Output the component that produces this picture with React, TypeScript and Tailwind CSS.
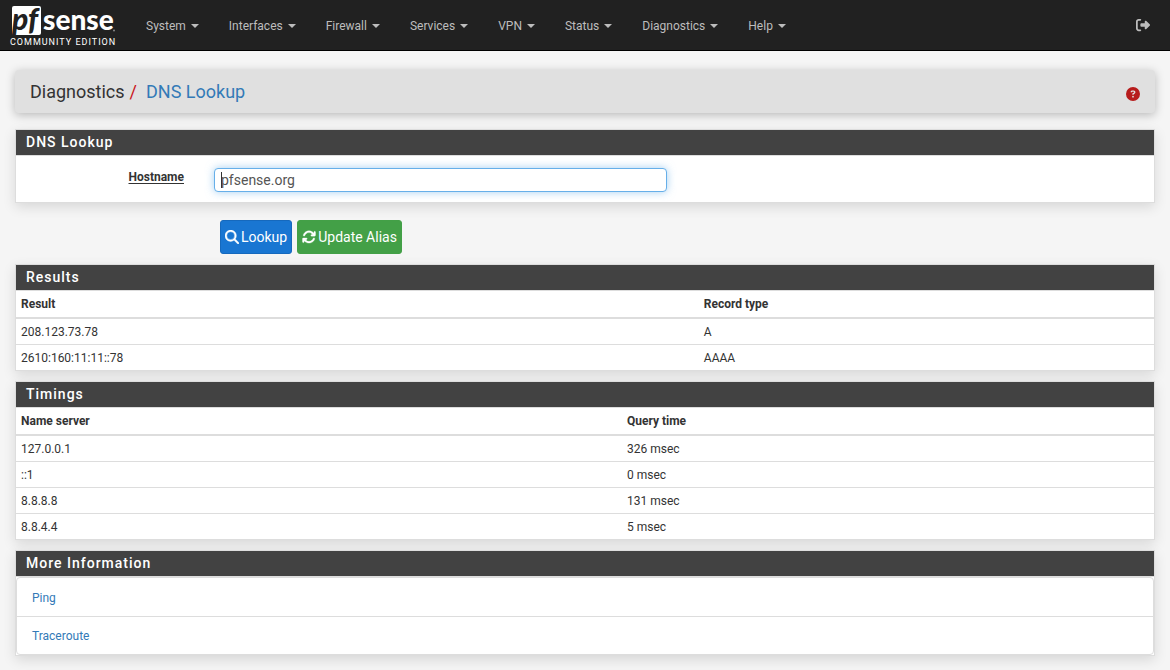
import type { ReactNode } from "react";
import { FaArrowsRotate, FaCircleQuestion, FaMagnifyingGlass, FaRightFromBracket } from "react-icons/fa6";

const menus = ["System", "Interfaces", "Firewall", "Services", "VPN", "Status", "Diagnostics", "Help"];

function Logo() {
  return (
    <svg viewBox="0 -6 106 42" className="h-[42px] w-[106px]" role="img" aria-label="pfSense">
      <path d="M4 0H29A2 2 0 0 1 31 2V27A2 2 0 0 1 29 29H4A2 2 0 0 1 2 27V2A2 2 0 0 1 4 0Z" fill="#fff" />
      <text x="2" y="24" fontFamily="Lato" fontStyle="italic" fontWeight="900" fontSize="30" fill="#212121">pf</text>
      <text x="33" y="24" fontFamily="Lato" fontWeight="900" fontSize="28" fill="#fff">sense</text>
      <circle cx="104" cy="24.500" r="1" fill="#888" />
    </svg>
  );
}

function Panel({ title, children }: { title: string; children: ReactNode }) {
  return (
    <section className="border border-[#ddd] bg-white shadow-[0_4px_12px_rgba(0,0,0,0.12)]">
      <h2 className="border-b border-[#ddd] bg-[#424242] px-[10px] pt-[2px] pb-[3px] text-[14px] leading-[20px] font-medium tracking-[1px] text-white">
        {title}
      </h2>
      {children}
    </section>
  );
}

function DataTable({ head, rows, first }: { head: string[]; rows: string[][]; first: string }) {
  return (
    <table className="w-full table-fixed border-collapse text-left leading-[17px]">
      <colgroup>
        <col className={first} />
        <col />
      </colgroup>
      <thead>
        <tr className="border-b-2 border-[#ddd]">
          {head.map((h) => (
            <th key={h} className="px-[5px] pt-[5px] pb-1 font-bold">{h}</th>
          ))}
        </tr>
      </thead>
      <tbody>
        {rows.map((r) => (
          <tr key={r[0]} className="border-t border-[#ddd] first:border-t-0">
            {r.map((c) => (
              <td key={c} className="px-[5px] pt-[5px] pb-[3px]">{c}</td>
            ))}
          </tr>
        ))}
      </tbody>
    </table>
  );
}

export default function App() {
  return (
    <div className="min-h-screen bg-[#f5f5f5] pb-[14px] font-['Roboto',sans-serif] text-[12px] leading-[17px] text-[#333]">
      <nav className="flex h-[51px] items-center border-b border-black bg-[#212121] pr-[20px]">
        <a href="#home" className="flex h-full w-[131px] flex-col pl-[10px] text-[9px] leading-[10px] text-white">
          <Logo />
          <span className="-mt-[5px] tracking-[1px]">COMMUNITY EDITION</span>
        </a>
        <ul className="flex flex-1 pt-[2px]">
          {menus.map((m) => (
            <li key={m}>
              <button type="button" className="flex items-center gap-[5px] px-[15px] py-4 text-[#bdbdbd]">
                {m}
                <span className="border-x-4 border-t-4 border-x-transparent border-t-[#bdbdbd]" />
              </button>
            </li>
          ))}
        </ul>
        <a href="#logout" aria-label="Logout" className="text-[14px] text-[#bdbdbd]"><FaRightFromBracket /></a>
      </nav>

      <main className="px-[15px] pt-[19px]">
        <header className="flex h-[43px] items-center justify-between rounded-[4px] bg-[#e0e0e0] px-[15px] shadow-[0_2px_10px_rgba(0,0,0,0.25)]">
          <h1 className="flex text-[18px] leading-[24px]">
            Diagnostics<span className="pr-[9px] pl-[5px] text-[#c9151b]">/</span>
            <a href="#dns" className="text-[#337ab7]">DNS Lookup</a>
          </h1>
          <a href="#help" aria-label="Help" className="pt-1 text-[14px] text-[#b71c1c]"><FaCircleQuestion /></a>
        </header>

        <form className="pt-4">
          <Panel title="DNS Lookup">
            <div className="flex h-[46px] items-start pt-3">
              <label htmlFor="host" className="w-[168px] pt-px text-right font-bold">
                <span className="underline decoration-1 underline-offset-2">Hostname</span>
              </label>
              <div className="relative ml-[30px] w-[39.8%]">
                <input
                  id="host"
                  defaultValue="pfsense.org"
                  className="block h-[24px] w-full rounded-[4px] border border-[#66afe9] bg-white px-[6px] text-[14px] text-[#555] caret-transparent shadow-[0_0_8px_rgba(102,175,233,0.6)] outline-none"
                />
                <span className="pointer-events-none absolute top-1 left-[7px] h-4 w-px bg-[#333]" />
              </div>
            </div>
          </Panel>
          <div className="flex gap-[5px] pt-[17px] pb-[10px] pl-[205px] text-[14px] text-white">
            <button type="button" className="flex h-[34px] items-center gap-[2px] rounded-[3px] border border-[#1669bd] bg-[#1976d2] px-[4px]">
              <FaMagnifyingGlass className="stroke-current stroke-[14px]" />Lookup
            </button>
            <button type="button" className="flex h-[34px] items-center gap-[2px] rounded-[3px] border border-[#43a047] bg-[#43a047] px-[4px]">
              <FaArrowsRotate className="stroke-current stroke-[10px]" />Update Alias
            </button>
          </div>
        </form>

        <div className="flex flex-col gap-[10px]">
          <Panel title="Results">
            <DataTable
              head={["Result", "Record type"]}
              rows={[["208.123.73.78", "A"], ["2610:160:11:11::78", "AAAA"]]}
              first="w-[60%]"
            />
          </Panel>
          <Panel title="Timings">
            <DataTable
              head={["Name server", "Query time"]}
              rows={[["127.0.0.1", "326 msec"], ["::1", "0 msec"], ["8.8.8.8", "131 msec"], ["8.8.4.4", "5 msec"]]}
              first="w-[53.25%]"
            />
          </Panel>
          <Panel title="More Information">
            <ul className="divide-y divide-[#ddd] rounded-[4px] border border-[#ddd] pt-px">
              {["Ping", "Traceroute"].map((t) => (
                <li key={t} className="px-[15px] pt-[11px] pb-[9px]">
                  <a href={"#" + t} className="text-[#337ab7]">{t}</a>
                </li>
              ))}
            </ul>
          </Panel>
        </div>
      </main>
    </div>
  );
}
